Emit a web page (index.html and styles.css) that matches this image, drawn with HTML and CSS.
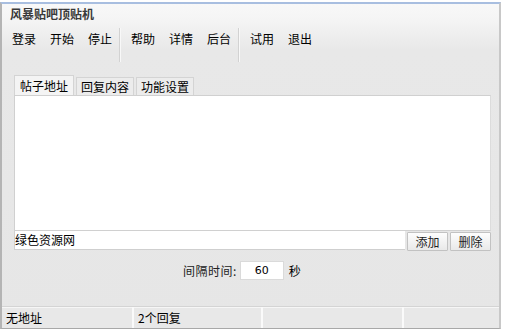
FILE: index.html
```html
<!DOCTYPE html>
<html>
<head>
<meta charset="utf-8">
<link rel="stylesheet" href="styles.css">
</head>
<body>
<div class="window">
  <div class="title">风暴贴吧顶贴机</div>
  <div class="toolbar">
    <div class="group">
      <span class="tool">登录</span><span class="tool">开始</span><span class="tool">停止</span>
    </div>
    <div class="sep"></div>
    <div class="group">
      <span class="tool">帮助</span><span class="tool">详情</span><span class="tool">后台</span>
    </div>
    <div class="sep"></div>
    <div class="group">
      <span class="tool">试用</span><span class="tool">退出</span>
    </div>
  </div>
  <div class="content">
    <div class="tabs">
      <span class="tab active">帖子地址</span><span class="tab">回复内容</span><span class="tab">功能设置</span>
    </div>
    <div class="panel"></div>
    <div class="inputrow">
      <div class="textinput">绿色资源网</div>
      <button class="btn">添加</button>
      <button class="btn">删除</button>
    </div>
    <div class="interval">
      <span class="label">间隔时间:</span>
      <span class="num">60</span>
      <span class="unit">秒</span>
    </div>
  </div>
  <div class="status">
    <div class="cell c1">无地址</div>
    <div class="cell c2">2个回复</div>
    <div class="cell c3"></div>
    <div class="cell c4"></div>
  </div>
</div>
</body>
</html>
```

FILE: styles.css
```css
html, body {
  margin: 0;
  padding: 0;
  background: #ffffff;
}
body {
  font-family: "Noto Sans CJK SC", "DejaVu Sans", sans-serif;
  font-size: 12px;
  color: #000;
  width: 505px;
  height: 332px;
  overflow: hidden;
  position: relative;
}
.window {
  margin-top: 2px;
  width: 497px;
  height: 324px;
  border-top: 2px solid #a8bee0;
  border-left: 2px solid #b4b4b4;
  border-right: 2px solid #c8c8c8;
  border-bottom: 1px solid #a8a8a8;
  background: linear-gradient(#f8f8f8 0px, #f5f5f5 14px, #e8e8e8 46px, #e6e6e6 100%);
  display: flex;
  flex-direction: column;
}
.title {
  height: 20px;
  line-height: 20px;
  padding-left: 8px;
  font-weight: bold;
  color: #3a3a3a;
}
.toolbar {
  display: flex;
  align-items: stretch;
  height: 38px;
  padding-left: 10px;
}
.group {
  display: flex;
  gap: 14px;
  padding-top: 5px;
  padding-right: 7px;
  padding-left: 2px;
}
.group:first-child { padding-left: 0; }
.tool {
  line-height: 20px;
  height: 20px;
  font-size: 12px;
}
.sep {
  width: 1px;
  background: #d2d2d2;
  border-right: 1px solid #f8f8f8;
  margin-right: 8px;
  margin-top: 4px;
}
.content {
  padding: 14px 0 0 12px;
  width: 477px;
}
.tabs {
  display: flex;
  gap: 2px;
  height: 19px;
  align-items: flex-end;
}
.tab {
  height: 17px;
  line-height: 17px;
  padding: 0 4px;
  background: #ececec;
  border: 1px solid #d4d4d4;
  border-bottom: none;
  font-size: 12px;
}
.tab.active {
  height: 19px;
  line-height: 19px;
  background: #f4f4f4;
  padding: 0 5px 0 5px;
}
.panel {
  height: 134px;
  background: #fff;
  border: 1px solid #d0d0d0;
  border-right-color: #dcdcdc;
}
.inputrow {
  display: flex;
  gap: 2px;
  height: 19px;
}
.textinput {
  flex: 1;
  background: #fff;
  border-bottom: 1px solid #cfcfcf;
  border-left: 1px solid #d0d0d0;
  line-height: 18px;
  font-size: 12px;
}
.btn {
  width: 41px;
  height: 19px;
  margin-top: 1px;
  padding: 0;
  font-family: inherit;
  font-size: 12px;
  color: #222;
  background: linear-gradient(#fdfdfd, #e9e9e9);
  border: 1px solid #c2c2c2;
  border-radius: 1px;
  line-height: 15px;
}
.interval {
  display: flex;
  align-items: center;
  height: 18px;
  margin-top: 11px;
  padding-left: 169px;
}
.label {
  color: #222;
  font-size: 12px;
  letter-spacing: 0.5px;
}
.num {
  width: 42px;
  height: 17px;
  line-height: 17px;
  text-align: center;
  background: #fff;
  border: 1px solid #dadada;
  margin-left: 3px;
  font-family: "DejaVu Sans", sans-serif;
  font-size: 11px;
}
.unit {
  margin-left: 5px;
  font-size: 12px;
}
.status {
  margin-top: auto;
  height: 21px;
  border-top: 1px solid #d4d4d4;
  box-shadow: inset 0 1px 0 #f6f6f6;
  display: flex;
  background: #e8e8e8;
}
.cell {
  line-height: 21px;
  padding-left: 4px;
  font-size: 12px;
  border-right: 2px solid #fafafa;
}
.c1 { width: 126px; }
.c2 { width: 123px; }
.c3 { width: 135px; }
.c4 { flex: 1; border-right: none; }
```
